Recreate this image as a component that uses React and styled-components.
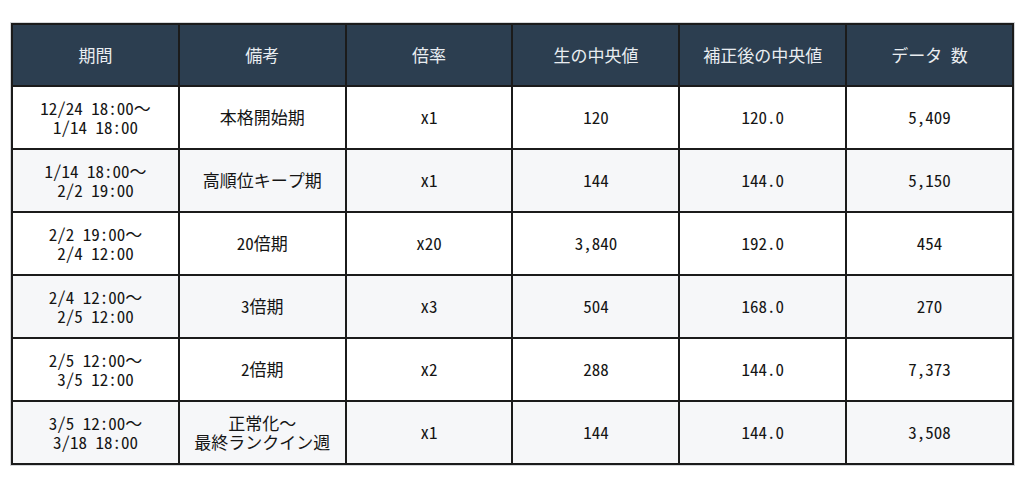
import React from "react";
import styled, { createGlobalStyle } from "styled-components";

const Global = createGlobalStyle`
  html, body { margin: 0; padding: 0; background: #ffffff; }
  body {
    font-family: "Noto Sans Mono CJK JP", "Noto Sans CJK JP", sans-serif;
  }
`;

const Page = styled.div`
  width: 1024px;
  height: 496px;
  padding: 23px 10px 0 11px;
  box-sizing: border-box;
`;

const Table = styled.table`
  width: 1003px;
  border-collapse: collapse;
  table-layout: fixed;
  box-shadow: 0 0 0 1px #d4d6d9;
  font-family: "Noto Sans Mono CJK JP", "Noto Sans CJK JP", sans-serif;
  font-size: 17px;
  line-height: 1.1;
  color: #151515;
`;

const HeadCell = styled.th`
  background: #2c3e50;
  color: #e9edf1;
  font-weight: 400;
  height: 60px;
  padding: 0 4px;
  text-align: center;
  vertical-align: middle;
  border: 2px solid #1b1b1b;
`;

const Row = styled.tr`
  background: ${(p) => (p.$alt ? "#f6f7f9" : "#ffffff")};
`;

const Cell = styled.td`
  height: 61px;
  padding: 0 4px;
  text-align: center;
  vertical-align: middle;
  border: 2px solid #1b1b1b;
  white-space: pre-line;
`;

const headers = ["期間", "備考", "倍率", "生の中央値", "補正後の中央値", "データ 数"];

const rows = [
  ["12/24 18:00～\n1/14 18:00", "本格開始期", "x1", "120", "120.0", "5,409"],
  ["1/14 18:00～\n2/2 19:00", "高順位キープ期", "x1", "144", "144.0", "5,150"],
  ["2/2 19:00～\n2/4 12:00", "20倍期", "x20", "3,840", "192.0", "454"],
  ["2/4 12:00～\n2/5 12:00", "3倍期", "x3", "504", "168.0", "270"],
  ["2/5 12:00～\n3/5 12:00", "2倍期", "x2", "288", "144.0", "7,373"],
  ["3/5 12:00～\n3/18 18:00", "正常化～\n最終ランクイン週", "x1", "144", "144.0", "3,508"],
];

export default function App() {
  return (
    <>
      <Global />
      <Page>
        <Table>
          <thead>
            <tr>
              {headers.map((h) => (
                <HeadCell key={h}>{h}</HeadCell>
              ))}
            </tr>
          </thead>
          <tbody>
            {rows.map((r, i) => (
              <Row key={i} $alt={i % 2 === 1}>
                {r.map((c, j) => (
                  <Cell key={j}>{c}</Cell>
                ))}
              </Row>
            ))}
          </tbody>
        </Table>
      </Page>
    </>
  );
}
